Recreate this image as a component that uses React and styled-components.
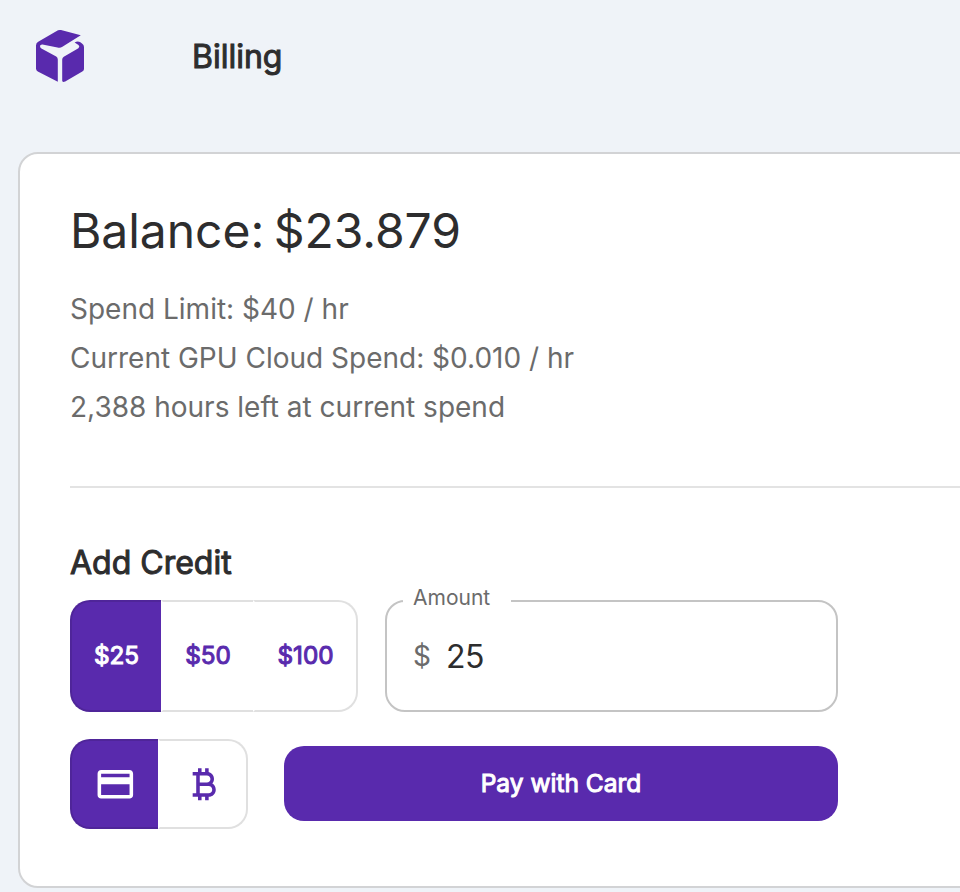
import React from 'react';
import styled, { createGlobalStyle, css } from 'styled-components';

const purple = '#592aad';
const ink = '#2d2d2e';
const muted = '#6b6b6b';

const GlobalStyle = createGlobalStyle`
  * { box-sizing: border-box; }
  html, body { margin: 0; background: #eff3f8; overflow: hidden; }
  body { font-family: Inter, "Liberation Sans", sans-serif; color: ${ink}; font-feature-settings: "calt" 0; }
  button, input { font: inherit; }
`;

const heavy = css`
  font-weight: 400;
  -webkit-text-stroke: 1px currentColor;
`;

const Page = styled.div`
  height: 892px;
  overflow: hidden;
  display: flex;
  flex-direction: column;
`;

const Header = styled.header`
  height: 152px;
  flex: none;
  display: flex;
  align-items: flex-start;
  padding: 29px 0 0 35px;
`;

const Logo = styled.svg`
  width: 50px;
  height: 54px;
  display: block;
`;

const PageTitle = styled.h1`
  ${heavy}
  margin: 4px 0 0 107px;
  font-size: 32px;
  line-height: 48px;
  letter-spacing: 0;
`;

const Card = styled.main`
  height: 736px;
  width: 1100px;
  flex: none;
  margin-left: 18px;
  padding: 52px 50px 0;
  background: #fff;
  border: 2px solid #d2d3d5;
  border-radius: 20px;
`;

const Balance = styled.h2`
  margin: 0;
  font-size: 48px;
  font-weight: 400;
  line-height: 50px;
  letter-spacing: -0.04px;
  word-spacing: -4px;
`;

const Details = styled.div`
  margin-top: 29px;
`;

const Detail = styled.p`
  margin: 0;
  font-size: 28px;
  line-height: 49px;
  letter-spacing: 0;
  color: ${muted};
`;

const Divider = styled.hr`
  margin: 54px 0 0;
  border: 0;
  height: 2px;
  background: #e3e3e3;
`;

const SectionTitle = styled.h3`
  ${heavy}
  margin: 51px 0 0;
  font-size: 32px;
  line-height: 48px;
`;

const Form = styled.section`
  width: 768px;
  margin-top: 13px;
`;

const Row = styled.div`
  display: flex;
  align-items: ${(p) => p.$align || 'center'};
  gap: ${(p) => p.$gap}px;
  margin-top: ${(p) => p.$top || 0}px;
`;

const Group = styled.div`
  display: flex;
  flex: none;
  height: ${(p) => p.$height}px;
`;

const Toggle = styled.button`
  ${heavy}
  width: ${(p) => p.$width}px;
  padding: 0 0 ${(p) => p.$lift || 0}px;
  display: flex;
  align-items: center;
  justify-content: center;
  font-size: 24.3px;
  background: ${(p) => (p.$selected ? purple : '#fff')};
  color: ${(p) => (p.$selected ? '#fff' : purple)};
  border: 2px solid ${(p) => (p.$selected ? '#4f2599' : '#e0e0e0')};
  &:first-child { border-right: 0; border-radius: 20px 0 0 20px; }
  &:not(:first-child) { border-left-color: transparent; }
  &:not(:first-child):not(:last-child) { border-right: 0; }
  &:last-child { border-radius: 0 20px 20px 0; }
  svg { width: 42.67px; height: 42.67px; fill: currentColor; stroke: none; display: block; }
`;

const Field = styled.label`
  position: relative;
  flex: 1;
  min-width: 0;
  height: 112px;
  display: flex;
  align-items: center;
  padding-left: 26px;
  border: 2px solid #c4c4c4;
  border-radius: 20px;
`;

const FieldLabel = styled.span`
  position: absolute;
  left: 16px;
  top: -18px;
  width: 108px;
  padding-left: 10px;
  background: #fff;
  font-size: 21px;
  line-height: 28px;
  color: ${muted};
`;

const Prefix = styled.span`
  width: 33px;
  font-size: 28px;
  color: ${muted};
`;

const AmountInput = styled.input`
  flex: 1;
  min-width: 0;
  padding: 0;
  border: 0;
  outline: 0;
  background: transparent;
  color: ${ink};
  font-size: 32px;
  letter-spacing: -0.4px;
`;

const PayButton = styled.button`
  ${heavy}
  flex: 1;
  height: 75px;
  margin-top: 7px;
  padding: 0 0 2px;
  border: 0;
  border-radius: 20px;
  background: ${purple};
  color: #fff;
  font-size: 24.5px;
`;

const CardIcon = () => (
  <svg viewBox="0 0 24 24">
    <path d="M20 4H4c-1.11 0-1.99.89-1.99 2L2 18c0 1.11.89 2 2 2h16c1.11 0 2-.89 2-2V6c0-1.11-.89-2-2-2zm0 14H4v-6h16v6zm0-10H4V6h16v2z" />
  </svg>
);

const BitcoinIcon = () => (
  <svg viewBox="0 0 24 24">
    <path d="M17.06 11.57c.59-.69.94-1.59.94-2.57 0-1.86-1.27-3.43-3-3.87V3h-2v2h-2V3H9v2H6v2h2v10H6v2h3v2h2v-2h2v2h2v-2c2.21 0 4-1.79 4-4 0-1.45-.78-2.73-1.94-3.43zM10 7h4c1.1 0 2 .9 2 2s-.9 2-2 2h-4V7zm5 10h-5v-4h5c1.1 0 2 .9 2 2s-.9 2-2 2z" />
  </svg>
);

const BoxLogo = () => (
  <Logo viewBox="35 29 50 54" fill={purple}>
    <path d="M58 30.3Q59.5 29.7 61 30.1L80.8 35.3L62.4 46.8Q60 48.3 57.5 47.4L42.5 44.4Q40.2 44.2 40 46Q40 47.6 41.4 48.5L56.2 56.6Q57.8 57.7 57.8 59.5V81.8L37.8 71.5Q36 70.5 36 68.5V45.5Q36 43 38.2 41.7Z" />
    <path d="M74.6 42.6Q77.5 40.8 80 42.1L82 43.5Q84 44.7 84 47V69Q84 70.6 82.3 71.5L65.2 81.4Q62.3 82.6 62.2 80.8V59.6Q62.2 57.8 63.8 56.8L78.4 48.3Q80.2 46.6 78.5 45Z" />
  </Logo>
);

export default function App() {
  return (
    <Page>
      <GlobalStyle />
      <Header>
        <BoxLogo />
        <PageTitle>Billing</PageTitle>
      </Header>
      <Card>
        <Balance>Balance: $23.879</Balance>
        <Details>
          <Detail>Spend Limit: $40 / hr</Detail>
          <Detail>Current GPU Cloud Spend: $0.010 / hr</Detail>
          <Detail>2,388 hours left at current spend</Detail>
        </Details>
        <Divider />
        <SectionTitle>Add Credit</SectionTitle>
        <Form>
          <Row $gap={27}>
            <Group $height={112}>
              <Toggle $width={91} $lift={2} $selected>$25</Toggle>
              <Toggle $width={92} $lift={2}>$50</Toggle>
              <Toggle $width={105} $lift={2}>$100</Toggle>
            </Group>
            <Field>
              <FieldLabel>Amount</FieldLabel>
              <Prefix>$</Prefix>
              <AmountInput defaultValue="25" />
            </Field>
          </Row>
          <Row $gap={36} $top={27} $align="flex-start">
            <Group $height={90}>
              <Toggle $width={88} $selected aria-label="Card"><CardIcon /></Toggle>
              <Toggle $width={90} aria-label="Bitcoin"><BitcoinIcon /></Toggle>
            </Group>
            <PayButton>Pay with Card</PayButton>
          </Row>
        </Form>
      </Card>
    </Page>
  );
}
